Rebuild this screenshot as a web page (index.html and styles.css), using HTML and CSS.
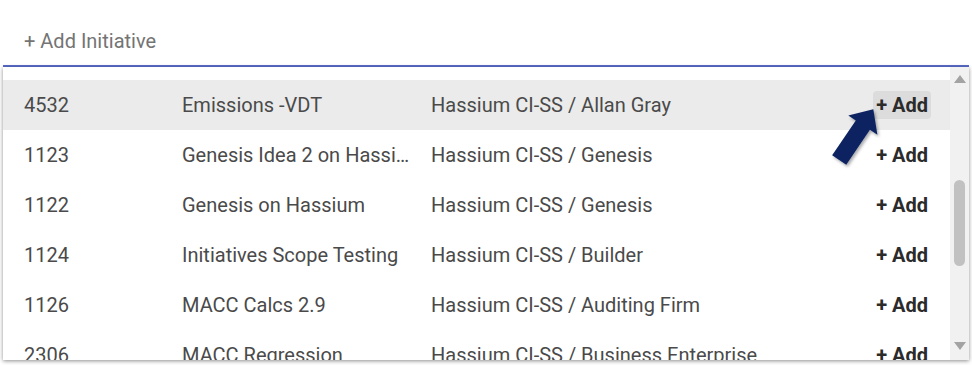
FILE: index.html
```html
<!DOCTYPE html>
<html>
<head>
<meta charset="utf-8">
<link rel="stylesheet" href="styles.css">
</head>
<body>
<div class="page">
  <div class="field">
    <span class="placeholder">+ Add Initiative</span>
  </div>
  <div class="panel">
    <div class="list">
      <div class="row row-active">
        <span class="c-id">4532</span>
        <span class="c-name">Emissions -VDT</span>
        <span class="c-group">Hassium CI-SS / Allan Gray</span>
        <span class="c-add"><span class="add-btn add-hover">+ Add</span></span>
      </div>
      <div class="row">
        <span class="c-id">1123</span>
        <span class="c-name">Genesis Idea 2 on Hassium CI-SS</span>
        <span class="c-group">Hassium CI-SS / Genesis</span>
        <span class="c-add"><span class="add-btn">+ Add</span></span>
      </div>
      <div class="row">
        <span class="c-id">1122</span>
        <span class="c-name">Genesis on Hassium</span>
        <span class="c-group">Hassium CI-SS / Genesis</span>
        <span class="c-add"><span class="add-btn">+ Add</span></span>
      </div>
      <div class="row">
        <span class="c-id">1124</span>
        <span class="c-name">Initiatives Scope Testing</span>
        <span class="c-group">Hassium CI-SS / Builder</span>
        <span class="c-add"><span class="add-btn">+ Add</span></span>
      </div>
      <div class="row">
        <span class="c-id">1126</span>
        <span class="c-name">MACC Calcs 2.9</span>
        <span class="c-group">Hassium CI-SS / Auditing Firm</span>
        <span class="c-add"><span class="add-btn">+ Add</span></span>
      </div>
      <div class="row">
        <span class="c-id">2306</span>
        <span class="c-name">MACC Regression</span>
        <span class="c-group">Hassium CI-SS / Business Enterprise</span>
        <span class="c-add"><span class="add-btn">+ Add</span></span>
      </div>
    </div>
    <div class="scrollbar">
      <span class="arrow-up"></span>
      <span class="thumb"></span>
      <span class="arrow-down"></span>
    </div>
  </div>
  <svg class="pointer" width="64" height="76" viewBox="0 0 64 76">
    <defs>
      <filter id="sh" x="-30%" y="-30%" width="160%" height="160%">
        <feDropShadow dx="1.5" dy="2" stdDeviation="1.5" flood-color="#000" flood-opacity="0.35"/>
      </filter>
    </defs>
    <polygon filter="url(#sh)" fill="#0a2360" points="47.3,9.3 51.4,34.7 43.9,29.8 20.25,64.7 6.15,55.3 29.8,20.4 22.3,15.5"/>
  </svg>
</div>
</body>
</html>
```
FILE: styles.css
```css
* { box-sizing: border-box; }
html, body { margin: 0; padding: 0; background: #ffffff; }
body { font-family: Roboto, "Noto Sans", sans-serif; color: #4a4a4a; }
.page { position: relative; width: 972px; height: 365px; overflow: hidden; }
.field {
  height: 67px;
  margin: 0 3px;
  padding: 30px 0 0 21px;
  border-bottom: 2px solid #5a6ccb;
  line-height: 23px;
}
.placeholder { font-size: 20px; color: #747474; }
.panel {
  display: flex;
  margin: 0 3px;
  height: 293px;
  background: #fff;
  box-shadow: 0 1px 4px rgba(0,0,0,0.45);
}
.list { flex: 1; padding-top: 13px; overflow: hidden; }
.row {
  display: flex;
  align-items: center;
  height: 50px;
  padding-left: 21px;
  font-size: 20px;
  color: #4a4a4a;
  white-space: nowrap;
}
.row-active { background: #ebebeb; }
.c-id { width: 158px; }
.c-name { width: 234px; overflow: hidden; text-overflow: ellipsis; margin-right: 15px; }
.c-group { flex: 1; }
.c-add { padding-right: 19px; }
.add-btn {
  display: inline-block;
  font-weight: 700;
  font-size: 20px;
  color: #2b2b2b;
  padding: 3px 3px;
  line-height: 22px;
  border-radius: 4px;
}
.add-hover { background: #dcdcdc; }
.scrollbar {
  width: 19px;
  background: #f1f1f1;
  display: flex;
  flex-direction: column;
  align-items: center;
  padding-top: 8px;
}
.arrow-up {
  width: 0; height: 0;
  border-left: 6px solid transparent;
  border-right: 6px solid transparent;
  border-bottom: 8px solid #a3a3a3;
}
.thumb {
  width: 11px;
  height: 86px;
  margin-top: 97px;
  border-radius: 6px;
  background: #c1c1c1;
}
.arrow-down {
  margin-top: 76px;
  width: 0; height: 0;
  border-left: 6px solid transparent;
  border-right: 6px solid transparent;
  border-top: 8px solid #a3a3a3;
}
.pointer { position: absolute; left: 826px; top: 100px; }
```
